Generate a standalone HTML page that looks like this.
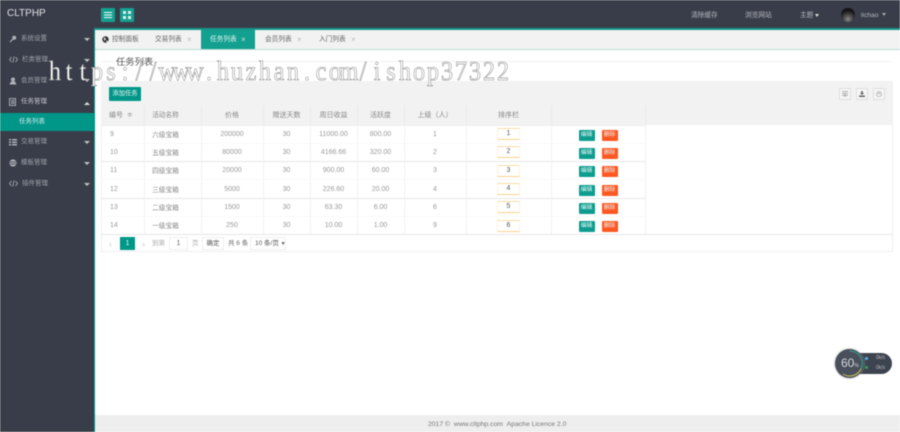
<!DOCTYPE html>
<html lang="zh"><head><meta charset="utf-8"><title>CLTPHP</title>
<style>
*{box-sizing:border-box}
html,body{margin:0;padding:0;width:900px;height:432px;overflow:hidden;background:#fff}
body{font-family:"Liberation Sans","Noto Sans CJK SC",sans-serif;font-size:7px;color:#666;position:relative}
#w{position:absolute;left:0;top:0;width:900px;height:432px;filter:blur(.5px);overflow:hidden}
.a{position:absolute;white-space:nowrap}
.side{left:0;top:0;width:94px;height:432px;background:#393d49}
.top{left:0;top:0;width:900px;height:28px;background:#393d49}
.m{color:#a0a4ac;font-size:6.5px;left:21px;line-height:10px}
.hd{color:#b4b7bf;font-size:6.7px;line-height:10px;top:10.5px}
.car{left:84px;width:0;height:0;border:3px solid transparent;border-top:3px solid #c2c2c2}
.tab{top:30px;height:19px;line-height:20px;font-size:6.7px;color:#666}
.x{color:#bbb;font-size:8px}
table{position:absolute;left:101px;top:105px;width:544px;border-collapse:collapse;table-layout:fixed;font-size:7px;color:#999}
td,th{height:18.3px;padding:0;text-align:center;font-weight:normal;border-right:1px solid #f2f2f2;border-bottom:1px solid #f8f8f8;overflow:hidden;white-space:nowrap}
th{height:20px;background:#f2f2f2;border-bottom:1px solid #eee;border-right:1px solid #e9e9e9;color:#888}
tr.s td{border-bottom:1px solid #e8e8e8}
td.n,th.n{padding:0 14px 1px 0;font-size:6.7px}
td.n{color:#888}
.l{text-align:left;padding-left:9px}
.inp{display:inline-block;width:23px;height:12px;border:1px solid #fff3dd;border-top-color:#fbdca8;border-bottom-color:#fbd38c;background:#fff;color:#555;line-height:10px;vertical-align:middle}
.b{display:inline-block;width:16px;height:11px;line-height:11px;color:#e6f6f4;font-size:5.8px;border-radius:1px;vertical-align:middle;position:relative;top:1px}
.g{background:#0e9c8e;margin-right:7px}.o{background:#ff5722}
.tool{width:12px;height:12px;top:88px;border:1px solid #ddd;background:#f7f7f7;border-radius:1px}
</style></head><body><div id="w">
<div class="a top"></div>
<div class="a side"></div>
<div class="a" style="left:94px;top:28px;width:1px;height:404px;background:#009688"></div>
<div class="a" style="left:94px;top:28px;width:806px;height:2px;background:#14968a"></div>
<div class="a" style="left:7px;top:8px;color:#dfe1e5;font-size:10px;line-height:12px">CLTPHP</div>

<div class="a" style="left:101px;top:8px;width:14px;height:14px;background:#14a090;border-radius:1px"></div>
<svg class="a" style="left:104px;top:12px" width="8" height="6"><path d="M0 .5h8M0 3h8M0 5.5h8" stroke="#fff" stroke-width="1.1"/></svg>
<div class="a" style="left:120px;top:8px;width:14px;height:14px;background:#14a090;border-radius:1px"></div>
<svg class="a" style="left:123px;top:11px" width="8" height="8"><path d="M0 0h3v3H0zM5 0h3v3H5zM0 5h3v3H0zM5 5h3v3H5z" fill="#fff" opacity=".85"/></svg>

<div class="a hd" style="left:691px">清除缓存</div>
<div class="a hd" style="left:745px">浏览网站</div>
<div class="a hd" style="left:800px">主题</div>
<div class="a" style="left:815px;top:14px;width:0;height:0;border:2.5px solid transparent;border-top:3px solid #ddd"></div>
<div class="a" style="left:841px;top:8px;width:14px;height:14px;border-radius:50%;background:radial-gradient(circle at 50% 80%,#8a8a8a 0,#444 35%,#111 70%)"></div>
<div class="a hd" style="left:861px">lichao</div>
<div class="a" style="left:882px;top:13px;width:0;height:0;border:2.5px solid transparent;border-top:3px solid #aaa"></div>

<!-- sidebar -->
<div class="a" style="left:0;top:113px;width:94px;height:18px;background:#009688"></div>
<svg class="a" style="left:9px;top:35px" width="8" height="8"><path d="M1 7l3-3" stroke="#aeb1b9" stroke-width="1.2"/><circle cx="5.2" cy="2.8" r="2" fill="#aeb1b9"/></svg>
<div class="a m" style="top:34px">系统设置</div><div class="a car" style="top:38px"></div>
<svg class="a" style="left:9px;top:56px" width="9" height="7"><path d="M2.500 1L.5 3.500 2.500 6M6.500 1l2 2.500-2 2.500M5 .5L4 6.500" fill="none" stroke="#aeb1b9" stroke-width=".8"/></svg>
<div class="a m" style="top:55px;left:22px">栏类管理</div><div class="a car" style="top:59px"></div>
<svg class="a" style="left:9px;top:77px" width="8" height="8"><circle cx="4" cy="2.500" r="2" fill="#aeb1b9"/><path d="M.5 7.500h7L6 4.500H2z" fill="#aeb1b9"/></svg>
<div class="a m" style="top:76px">会员管理</div><div class="a car" style="top:79px"></div>
<svg class="a" style="left:9px;top:98px" width="8" height="8"><path d="M.5 .5h6v7h-6zM2 2.500h3.500M2 4h3.500M2 5.500h3.500" fill="none" stroke="#c5c8cf" stroke-width=".8"/></svg>
<div class="a m" style="top:97px;color:#c8cad0">任务管理</div>
<div class="a" style="left:84px;top:99px;width:0;height:0;border:3px solid transparent;border-bottom:3px solid #ddd"></div>
<div class="a m" style="top:117px;left:19px;color:#d6eeea">任务列表</div>
<svg class="a" style="left:9px;top:138px" width="8" height="8"><path d="M0 1h2v1.500H0zM3 1h5v1.500H3zM0 3.500h2V5H0zM3 3.500h5V5H3zM0 6h2v1.500H0zM3 6h5v1.500H3z" fill="#aeb1b9"/></svg>
<div class="a m" style="top:137px;left:21px">交易管理</div><div class="a car" style="top:141px"></div>
<svg class="a" style="left:9px;top:159px" width="8" height="8"><circle cx="4" cy="4" r="3.600" fill="#aeb1b9"/><path d="M1 3h6M1 5h6" stroke="#393d49" stroke-width=".7"/></svg>
<div class="a m" style="top:158px">模板管理</div><div class="a car" style="top:162px"></div>
<svg class="a" style="left:9px;top:180px" width="9" height="7"><path d="M2.500 1L.5 3.500 2.500 6M6.500 1l2 2.500-2 2.500M5 .5L4 6.500" fill="none" stroke="#aeb1b9" stroke-width=".8"/></svg>
<div class="a m" style="top:179px;left:22px">插件管理</div><div class="a car" style="top:183px"></div>

<!-- tabs -->
<div class="a" style="left:95px;top:30px;width:805px;height:19px;background:#f2f2f2"></div>
<div class="a" style="left:95px;top:49px;width:805px;height:1px;background:#b5dcd6"></div>
<div class="a" style="left:201px;top:30px;width:54px;height:19px;background:#14a090"></div>
<svg class="a" style="left:102px;top:36px" width="7" height="7"><circle cx="3.500" cy="3.500" r="3.200" fill="#333"/><path d="M2 1l2 2-2 2zM5 4l1 2-2 0z" fill="#eee"/></svg>
<div class="a tab" style="left:112px">控制面板</div>
<div class="a tab" style="left:155px">交易列表</div><div class="a tab x" style="left:187px">×</div>
<div class="a tab" style="left:210px;color:#e4f4f1">任务列表</div><div class="a tab x" style="left:241px;color:#bfe3dd">×</div>
<div class="a tab" style="left:265px">会员列表</div><div class="a tab x" style="left:297px">×</div>
<div class="a tab" style="left:319px">入门列表</div><div class="a tab x" style="left:351px">×</div>

<!-- title -->
<div class="a" style="left:101px;top:61px;width:792px;height:1px;background:#f0f0f0"></div>
<div class="a" style="left:116px;top:56px;font-size:9.300px;line-height:12px;color:#555">任务列表</div>

<!-- toolbar -->
<div class="a" style="left:101px;top:81px;width:792px;height:171px;border:1px solid #eee"></div>
<div class="a" style="left:101px;top:81px;width:792px;height:24px;background:#f2f2f2"></div>
<div class="a" style="left:109px;top:87px;width:32px;height:14px;background:#009688;color:#e8f6f4;font-size:6.300px;line-height:14px;text-align:center;border-radius:1px">添加任务</div>
<div class="a tool" style="left:839px"></div>
<svg class="a" style="left:842px;top:91px" width="6" height="6"><path d="M0 .5h6M0 2.500h6M0 4.500h6M3 2.500v3.500" stroke="#999" stroke-width=".8"/></svg>
<div class="a tool" style="left:856px"></div>
<svg class="a" style="left:859px;top:91px" width="6" height="6"><path d="M2.200 0h1.600v2h1.500L3 4 .7 2h1.500zM0 4.500h6V6H0z" fill="#666"/></svg>
<div class="a tool" style="left:873px"></div>
<svg class="a" style="left:876px;top:91px" width="6" height="6"><path d="M1.500 .5h3v1.500h-3zM.5 2.500h5v2H4.500V5.500h-3V4.500H.5z" fill="none" stroke="#bbb" stroke-width=".8"/></svg>
<div class="a" style="left:645px;top:105px;width:248px;height:20px;background:#f2f2f2"></div>
<div class="a" style="left:645px;top:105px;width:1px;height:129px;background:#eee"></div>

<table>
<colgroup><col style="width:43px"><col style="width:57px"><col style="width:62px"><col style="width:47px"><col style="width:47px"><col style="width:47px"><col style="width:62px"><col style="width:85px"><col style="width:94px"></colgroup>
<tr><th class="l" style="padding-left:8px">编号 &nbsp;≑</th><th class="n">活动名称</th><th>价格</th><th>赠送天数</th><th>周日收益</th><th>活跃度</th><th>上级（人）</th><th>排序栏</th><th></th></tr>
<tr><td class="l">9</td><td class="n">六级宝箱</td><td>200000</td><td>30</td><td>11000.00</td><td>800.00</td><td>1</td><td><span class="inp">1</span></td><td><span class="b g">编辑</span><span class="b o">删除</span></td></tr>
<tr class="s"><td class="l">10</td><td class="n">五级宝箱</td><td>80000</td><td>30</td><td>4166.66</td><td>320.00</td><td>2</td><td><span class="inp">2</span></td><td><span class="b g">编辑</span><span class="b o">删除</span></td></tr>
<tr><td class="l">11</td><td class="n">四级宝箱</td><td>20000</td><td>30</td><td>900.00</td><td>60.00</td><td>3</td><td><span class="inp">3</span></td><td><span class="b g">编辑</span><span class="b o">删除</span></td></tr>
<tr class="s"><td class="l">12</td><td class="n">三级宝箱</td><td>5000</td><td>30</td><td>226.60</td><td>20.00</td><td>4</td><td><span class="inp">4</span></td><td><span class="b g">编辑</span><span class="b o">删除</span></td></tr>
<tr><td class="l">13</td><td class="n">二级宝箱</td><td>1500</td><td>30</td><td>63.30</td><td>6.00</td><td>6</td><td><span class="inp">5</span></td><td><span class="b g">编辑</span><span class="b o">删除</span></td></tr>
<tr class="s"><td class="l">14</td><td class="n">一级宝箱</td><td>250</td><td>30</td><td>10.00</td><td>1.00</td><td>9</td><td><span class="inp">6</span></td><td><span class="b g">编辑</span><span class="b o">删除</span></td></tr>
</table>
<div class="a" style="left:101px;top:234px;width:792px;height:1px;background:#e6e6e6"></div>

<!-- pagination -->
<div class="a" style="left:109px;top:239px;color:#ccc;font-size:9px;line-height:10px">‹</div>
<div class="a" style="left:120px;top:237px;width:15px;height:13px;background:#009688;color:#dff;line-height:13px;text-align:center">1</div>
<div class="a" style="left:142px;top:239px;color:#ccc;font-size:9px;line-height:10px">›</div>
<div class="a" style="left:152px;top:239px;color:#aaa;line-height:10px;font-size:6.500px">到第</div>
<div class="a" style="left:169px;top:237px;width:19px;height:13px;border:1px solid #eee;line-height:11px;text-align:center;color:#666">1</div>
<div class="a" style="left:192px;top:239px;color:#aaa;line-height:10px;font-size:6.500px">页</div>
<div class="a" style="left:202px;top:237px;width:22px;height:13px;border:1px solid #eee;line-height:11px;text-align:center;color:#555;font-size:6.500px">确定</div>
<div class="a" style="left:228px;top:239px;color:#666;line-height:10px;font-size:6.500px">共 6 条</div>
<div class="a" style="left:250px;top:237px;width:36px;height:13px;border:1px solid #eee;line-height:11px;padding-left:4px;color:#555;font-size:6.500px">10 条/页 <span style="font-size:5px">▼</span></div>

<!-- watermark -->
<svg class="a" style="left:0;top:50px" width="560" height="40"><g transform="scale(.9 1)"><text y="30" x="61.11 76.67 92.22 107.78 123.33 138.89 154.44 170 185.56 201.11 216.67 232.22 247.78 263.33 278.89 294.44 310 325.56 341.11 356.67 372.22 387.78 403.33 418.89 434.44 450 465.56 481.11 496.67 512.22 527.78 543.33 558.89" text-anchor="middle" font-family="'Liberation Serif',serif" font-size="27" fill="#fff" stroke="#8a8a8a" stroke-width=".55">https://www.huzhan.com/ishop37322</text></g></svg>

<!-- footer -->
<div class="a" style="left:95px;top:415px;width:805px;height:17px;background:#eee"></div>
<div class="a" style="left:428px;top:419.500px;font-size:6.800px;line-height:10px;color:#777">2017 © &nbsp;www.cltphp.com &nbsp;Apache Licence 2.0</div>

<!-- widget -->
<div class="a" style="left:842px;top:353px;width:50px;height:21px;border-radius:11px;background:#3e4350"></div>
<div class="a" style="left:835px;top:349px;width:29px;height:29px;border-radius:50%;background:#4a4f5c;box-shadow:0 0 2px #999"></div>
<svg class="a" style="left:835px;top:349px" width="29" height="29"><path d="M14.500 2A12.500 12.500 0 0 1 26 20" fill="none" stroke="#2fa98f" stroke-width="1"/><path d="M26 20A12.500 12.500 0 0 1 8 25" fill="none" stroke="#cfc65a" stroke-width="1"/></svg>
<div class="a" style="left:841px;top:356px;color:#d5d7db;font-size:12px;line-height:14px">60<span style="font-size:5px">%</span></div>
<div class="a" style="left:865px;top:357px;width:3px;height:3px;border-radius:50%;background:#4db4ee"></div>
<div class="a" style="left:865px;top:366px;width:3px;height:3px;border-radius:50%;background:#2ea84a"></div>
<div class="a" style="left:876px;top:355px;color:#bbb;font-size:5px;line-height:6px">0k/s</div>
<div class="a" style="left:876px;top:365px;color:#bbb;font-size:5px;line-height:6px">0k/s</div>
</div></body></html>
